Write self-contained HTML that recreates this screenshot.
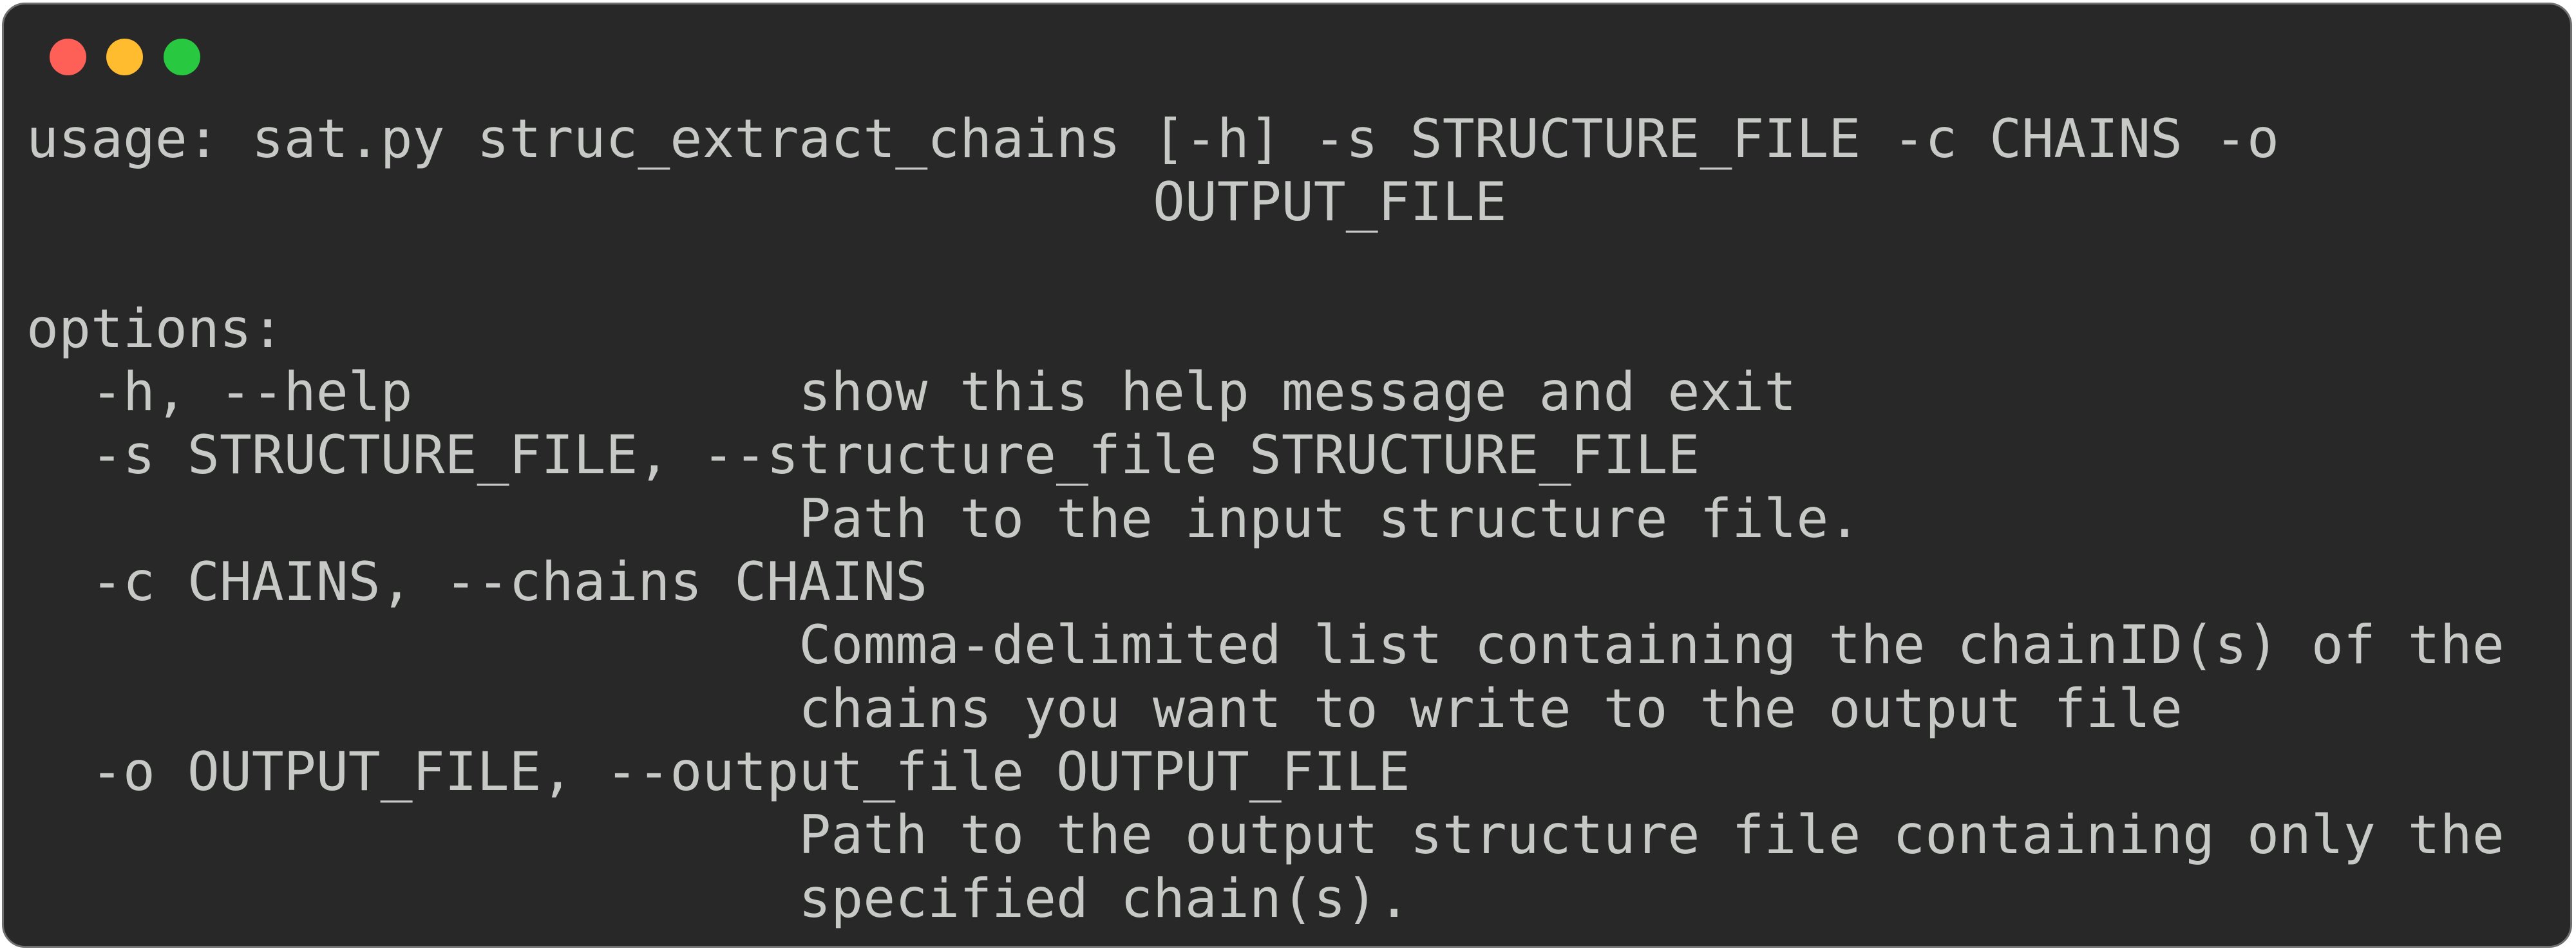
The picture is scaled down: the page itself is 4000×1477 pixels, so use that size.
<!DOCTYPE html>
<html><head><meta charset="utf-8"><style>
html,body{margin:0;padding:0;background:#fff;}
body{width:4000px;height:1477px;position:relative;overflow:hidden;}
.w{position:absolute;left:3px;top:4px;width:3991px;height:1468px;background:#282828;border:3px solid #6f6f6f;border-radius:36px;box-sizing:border-box;}
.dot{position:absolute;width:57px;height:57px;border-radius:50%;top:60px;}
pre{position:absolute;left:41px;top:167px;margin:0;font-family:"DejaVu Sans Mono","Liberation Mono",monospace;font-size:83px;line-height:98.3px;color:#c7c9c7;}
</style></head><body>
<div class="w"></div>
<div class="dot" style="left:77px;background:#fe5f57"></div>
<div class="dot" style="left:165px;background:#febc2e"></div>
<div class="dot" style="left:254px;background:#28c840"></div>
<pre>usage: sat.py struc_extract_chains [-h] -s STRUCTURE_FILE -c CHAINS -o
                                   OUTPUT_FILE

options:
  -h, --help            show this help message and exit
  -s STRUCTURE_FILE, --structure_file STRUCTURE_FILE
                        Path to the input structure file.
  -c CHAINS, --chains CHAINS
                        Comma-delimited list containing the chainID(s) of the
                        chains you want to write to the output file
  -o OUTPUT_FILE, --output_file OUTPUT_FILE
                        Path to the output structure file containing only the
                        specified chain(s).</pre>
</body></html>
